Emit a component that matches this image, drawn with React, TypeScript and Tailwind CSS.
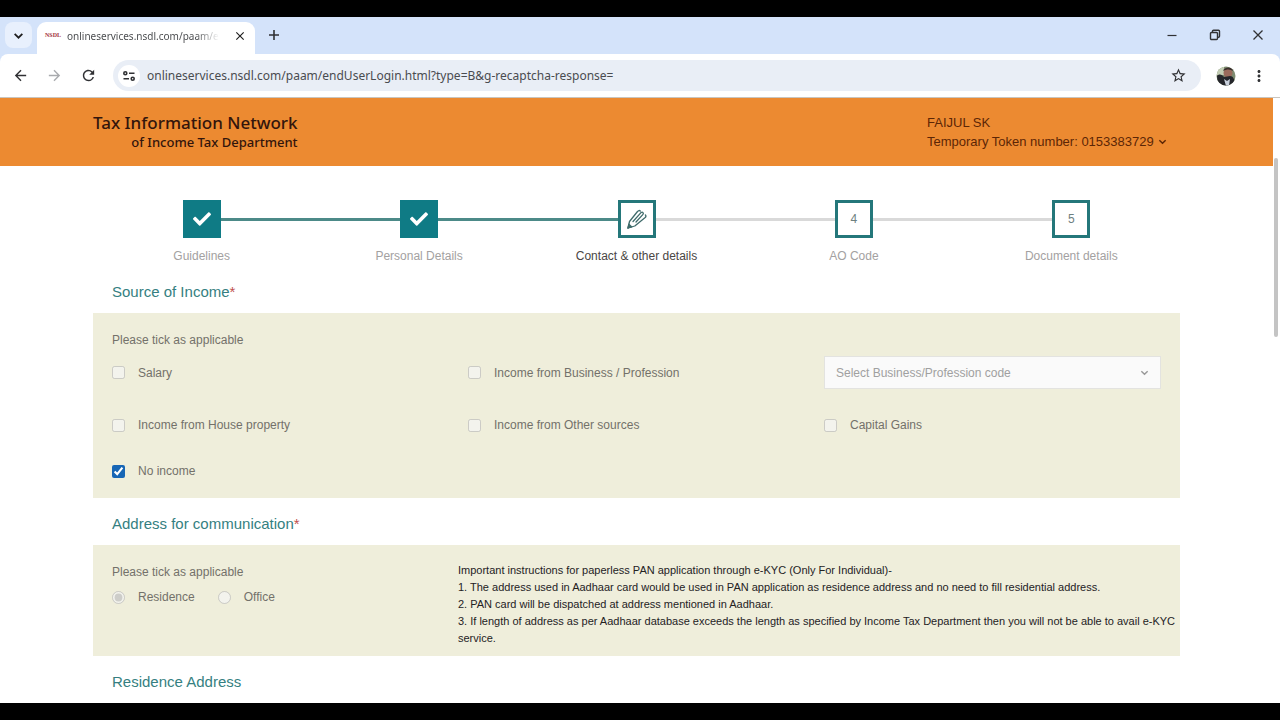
import type { ReactNode } from "react";
import { FaCheck } from "react-icons/fa";
import { MdArrowBack, MdArrowForward, MdClose, MdMoreVert, MdRefresh, MdStarBorder } from "react-icons/md";

type StepState = "done" | "current" | "todo";

const steps: { label: string; state: StepState }[] = [
  { label: "Guidelines", state: "done" },
  { label: "Personal Details", state: "done" },
  { label: "Contact & other details", state: "current" },
  { label: "AO Code", state: "todo" },
  { label: "Document details", state: "todo" },
];

function Chevron({ className }: { className: string }) {
  return (
    <svg viewBox="0 0 10 10" fill="none" stroke="currentColor" strokeWidth="1.6" className={className} aria-hidden="true">
      <path d="M1.5 3.5 5 7l3.5-3.5" />
    </svg>
  );
}

function TabStrip() {
  return (
    <div className="flex h-[37px] shrink-0 items-end bg-[#d4e3fa] pl-[5px] text-[#303134]">
      <button aria-label="Search tabs" className="mb-[6px] flex h-[26px] w-[27px] items-center justify-center rounded-lg bg-[#e8f0fd]">
        <Chevron className="size-[11px] stroke-[#1f1f1f]" />
      </button>
      <div className="ml-[5px] flex h-8 w-[218px] items-center rounded-t-[9px] bg-white pr-[8px] pl-[8px] pb-[5px]">
        <span className="w-[22px] font-['Liberation_Serif',serif] text-[6px] font-bold text-[#a3333b]">NSDL</span>
        <span className="bg-linear-to-r from-[#45474a] from-85% to-transparent bg-clip-text font-['Noto_Sans',sans-serif] text-[10px] leading-4 whitespace-nowrap text-transparent">
          onlineservices.nsdl.com/paam/e
        </span>
        <button aria-label="Close tab" className="ml-auto">
          <MdClose className="size-[14px] text-[#1f1f1f]" />
        </button>
      </div>
      <button aria-label="New tab" className="mb-[12px] ml-[12px]">
        <svg viewBox="0 0 14 14" className="size-[14px]" stroke="currentColor" strokeWidth="1.6">
          <path d="M7 2v10M2 7h10" />
        </svg>
      </button>
      <div className="mb-[12px] ml-auto flex items-center gap-[29px] pr-[15px]">
        <button aria-label="Minimize">
          <svg viewBox="0 0 14 14" className="size-[14px]" stroke="currentColor" strokeWidth="1.2">
            <path d="M2.500 7.500h9" />
          </svg>
        </button>
        <button aria-label="Restore">
          <svg viewBox="0 0 14 14" className="size-[14px]" fill="none" stroke="currentColor" strokeWidth="1.4">
            <rect x="2.500" y="4.500" width="7" height="7" rx="1" />
            <path d="M4.500 4.300V3.300a1 1 0 0 1 1-1h5a1 1 0 0 1 1 1v5a1 1 0 0 1-1 1h-.8" />
          </svg>
        </button>
        <button aria-label="Close window">
          <svg viewBox="0 0 14 14" className="size-[14px]" stroke="currentColor" strokeWidth="1.3">
            <path d="M2.500 2.500l9 9M11.500 2.500l-9 9" />
          </svg>
        </button>
      </div>
    </div>
  );
}

function Toolbar() {
  return (
    <div className="shrink-0 bg-[#d4e3fa]">
      <div className="flex h-11 items-center rounded-t-lg border-b border-[#c9c5bf] bg-white pr-[12px] pl-[12px] text-[#303134]">
        <button aria-label="Back">
          <MdArrowBack className="size-[17px]" />
        </button>
        <button aria-label="Forward" className="ml-[17px] text-[#a9abae]">
          <MdArrowForward className="size-[17px]" />
        </button>
        <button aria-label="Reload" className="ml-[17px]">
          <MdRefresh className="size-[17px]" />
        </button>
        <div className="ml-[16px] flex h-[31px] flex-1 items-center rounded-full bg-[#e9eef6] pr-[14px] pl-[5px]">
          <button aria-label="View site information" className="flex size-[22px] shrink-0 items-center justify-center rounded-full bg-white">
            <svg viewBox="0 0 14 14" className="size-[14px]" fill="none" stroke="currentColor" strokeWidth="1.6">
              <circle cx="3.300" cy="4.200" r="1.500" />
              <path d="M7 4.200h5.500M1.500 9.800H7" />
              <circle cx="10.700" cy="9.800" r="1.500" />
            </svg>
          </button>
          <input
            aria-label="Address"
            defaultValue="onlineservices.nsdl.com/paam/endUserLogin.html?type=B&g-recaptcha-response="
            className="ml-[7px] min-w-0 flex-1 bg-transparent font-['Noto_Sans',sans-serif] text-[12px] leading-5 text-[#4a4c50] outline-none"
          />
          <button aria-label="Bookmark this page">
            <MdStarBorder className="size-[17px]" />
          </button>
        </div>
        <button aria-label="Profile" className="ml-[15px]">
          <svg viewBox="0 0 20 20" className="size-[20px]">
            <clipPath id="avatar">
              <circle cx="10" cy="10" r="9.500" />
            </clipPath>
            <g clipPath="url(#avatar)">
              <rect width="20" height="20" fill="#7d8b70" />
              <path d="M0 0h8v9H0z" fill="#c3cdb4" />
              <circle cx="12" cy="7" r="4.500" fill="#9a6a5c" />
              <path d="M7 5c1-4 9-5 10 0-3-2-6-2-10 0z" fill="#3b2f2d" />
              <path d="M1 10c3-3 5-1 7 1l6-1c3 0 5 3 5 10H2z" fill="#25262b" />
              <path d="M8 13l2 7h3l1-7-3 2z" fill="#c9d0dc" />
            </g>
          </svg>
        </button>
        <button aria-label="Browser menu" className="ml-[14px]">
          <MdMoreVert className="size-[18px]" />
        </button>
      </div>
    </div>
  );
}

function SiteHeader() {
  return (
    <header className="bg-[#ec8a31]">
      <div className="mx-auto flex h-[68px] max-w-[1087px] justify-between">
        <a href="#home" className="pt-[14px] text-right font-['Noto_Sans',sans-serif] text-[#33150c]">
          <span className="block text-[17px] leading-[22px] font-medium">Tax Information Network</span>
          <span className="block text-[13px] leading-[16px] font-medium">of Income Tax Department</span>
        </a>
        <div className="w-[253px] pt-[15px] text-[13px] leading-[19px] text-[#5c2606]">
          <p>FAIJUL SK</p>
          <button className="flex items-center gap-1 whitespace-nowrap">
            Temporary Token number: 0153383729
            <Chevron className="size-[9px]" />
          </button>
        </div>
      </div>
    </header>
  );
}

function PencilIcon() {
  return (
    <svg viewBox="0 0 20 20" className="size-5" fill="none" stroke="#3f6b6b" strokeWidth="1.3" strokeLinecap="round" strokeLinejoin="round" aria-hidden="true">
      <path d="M1 19 2.500 12.500 10.500 2.500Q12 .8 13.300 2" />
      <path d="M1 19l6.800-2L18.200 8.500q1.300-1.300.2-2.500" />
      <path d="M6 12.500 14 3.600q1.200-1 2 0t-.2 2L9 13" />
      <path d="M1 19l.9-3.800 2.900 2.700z" fill="#3f6b6b" />
    </svg>
  );
}

function Stepper() {
  return (
    <ol className="grid grid-cols-5 pt-[34px]">
      {steps.map((step, i) => {
        const first = i === 0;
        const last = i === steps.length - 1;
        const left = first ? "bg-transparent" : step.state === "todo" ? "bg-[#d9d9d9]" : "bg-[#4c8a88]";
        const right = last ? "bg-transparent" : step.state === "done" ? "bg-[#4c8a88]" : "bg-[#d9d9d9]";
        return (
          <li key={step.label} className="flex flex-col items-center">
            <div className="flex w-full items-center">
              <span className={`h-[3px] flex-1 ${left}`} />
              <span
                className={`flex size-[38px] items-center justify-center text-[12px] ${
                  step.state === "done" ? "bg-[#0f7b85] text-white" : "border-3 border-[#24777a] bg-white text-[#6d8080]"
                }`}
              >
                {step.state === "done" && <FaCheck className="size-[18px]" />}
                {step.state === "current" && <PencilIcon />}
                {step.state === "todo" && i + 1}
              </span>
              <span className={`h-[3px] flex-1 ${right}`} />
            </div>
            <span className={`mt-[8px] text-[12px] leading-5 ${step.state === "current" ? "text-[#4a4644]" : "text-[#a3a1a1]"}`}>
              {step.label}
            </span>
          </li>
        );
      })}
    </ol>
  );
}

function SectionTitle({ children, required }: { children: ReactNode; required?: boolean }) {
  return (
    <h2 className="px-[19px] pt-4 pb-[11px] text-[15px] leading-5 text-[#357f81]">
      {children}
      {required && <span className="text-[#c0504d]">*</span>}
    </h2>
  );
}

function Choice({
  type,
  name,
  label,
  checked,
  disabled,
}: {
  type: "checkbox" | "radio";
  name: string;
  label: string;
  checked?: boolean;
  disabled?: boolean;
}) {
  return (
    <label className="flex items-center gap-[13px] leading-5">
      <input type={type} name={name} defaultChecked={checked} disabled={disabled} className="size-[13px] accent-[#1766b5]" />
      {label}
    </label>
  );
}

export default function App() {
  return (
    <div className="flex h-screen flex-col overflow-hidden bg-black py-[17px] font-['Liberation_Sans',Arial,sans-serif]">
      <TabStrip />
      <Toolbar />
      <div className="flex min-h-0 flex-1 bg-white">
        <div className="min-w-0 flex-1 overflow-hidden">
          <SiteHeader />
          <main className="mx-auto max-w-[1087px]">
            <Stepper />
            <section>
              <SectionTitle required>Source of Income</SectionTitle>
              <div className="bg-[#efeedb] px-[19px] py-[17px] text-[12px] leading-5 text-[#73716a]">
                <p>Please tick as applicable</p>
                <div className="mt-[6px] grid grid-cols-3 items-center gap-x-[19px] gap-y-[26px]">
                  <Choice type="checkbox" name="salary" label="Salary" disabled />
                  <Choice type="checkbox" name="business" label="Income from Business / Profession" disabled />
                  <div className="relative">
                    <select
                      aria-label="Business/Profession code"
                      disabled
                      className="block h-[33px] w-full appearance-none border border-[#e3e3e0] bg-[#fafafa] px-[11px] text-[12px] text-[#a0a0a0] opacity-100"
                    >
                      <option>Select Business/Profession code</option>
                    </select>
                    <Chevron className="pointer-events-none absolute top-3 right-3 size-[9px] text-[#999999]" />
                  </div>
                  <Choice type="checkbox" name="house" label="Income from House property" disabled />
                  <Choice type="checkbox" name="other" label="Income from Other sources" disabled />
                  <Choice type="checkbox" name="capital" label="Capital Gains" disabled />
                  <Choice type="checkbox" name="none" label="No income" checked />
                </div>
              </div>
            </section>
            <section>
              <SectionTitle required>Address for communication</SectionTitle>
              <div className="grid grid-cols-[346px_1fr] bg-[#efeedb] pt-[17px] pb-[9px] pl-[19px] text-[12px] leading-5 text-[#73716a]">
                <div>
                  <p>Please tick as applicable</p>
                  <div className="mt-[5px] flex gap-[23px]">
                    <Choice type="radio" name="address" label="Residence" checked disabled />
                    <Choice type="radio" name="address" label="Office" disabled />
                  </div>
                </div>
                <div className="text-[11px] leading-[17px] text-[#24221f]">
                  <p>Important instructions for paperless PAN application through e-KYC (Only For Individual)-</p>
                  <p>1. The address used in Aadhaar card would be used in PAN application as residence address and no need to fill residential address.</p>
                  <p>2. PAN card will be dispatched at address mentioned in Aadhaar.</p>
                  <p>3. If length of address as per Aadhaar database exceeds the length as specified by Income Tax Department then you will not be able to avail e-KYC service.</p>
                </div>
              </div>
            </section>
            <section>
              <SectionTitle>Residence Address</SectionTitle>
            </section>
          </main>
        </div>
        <div className="w-[7px] shrink-0 pt-[60px] pl-px">
          <div className="h-[179px] w-[4px] rounded-full bg-[#c4c4c4]" />
        </div>
      </div>
    </div>
  );
}
